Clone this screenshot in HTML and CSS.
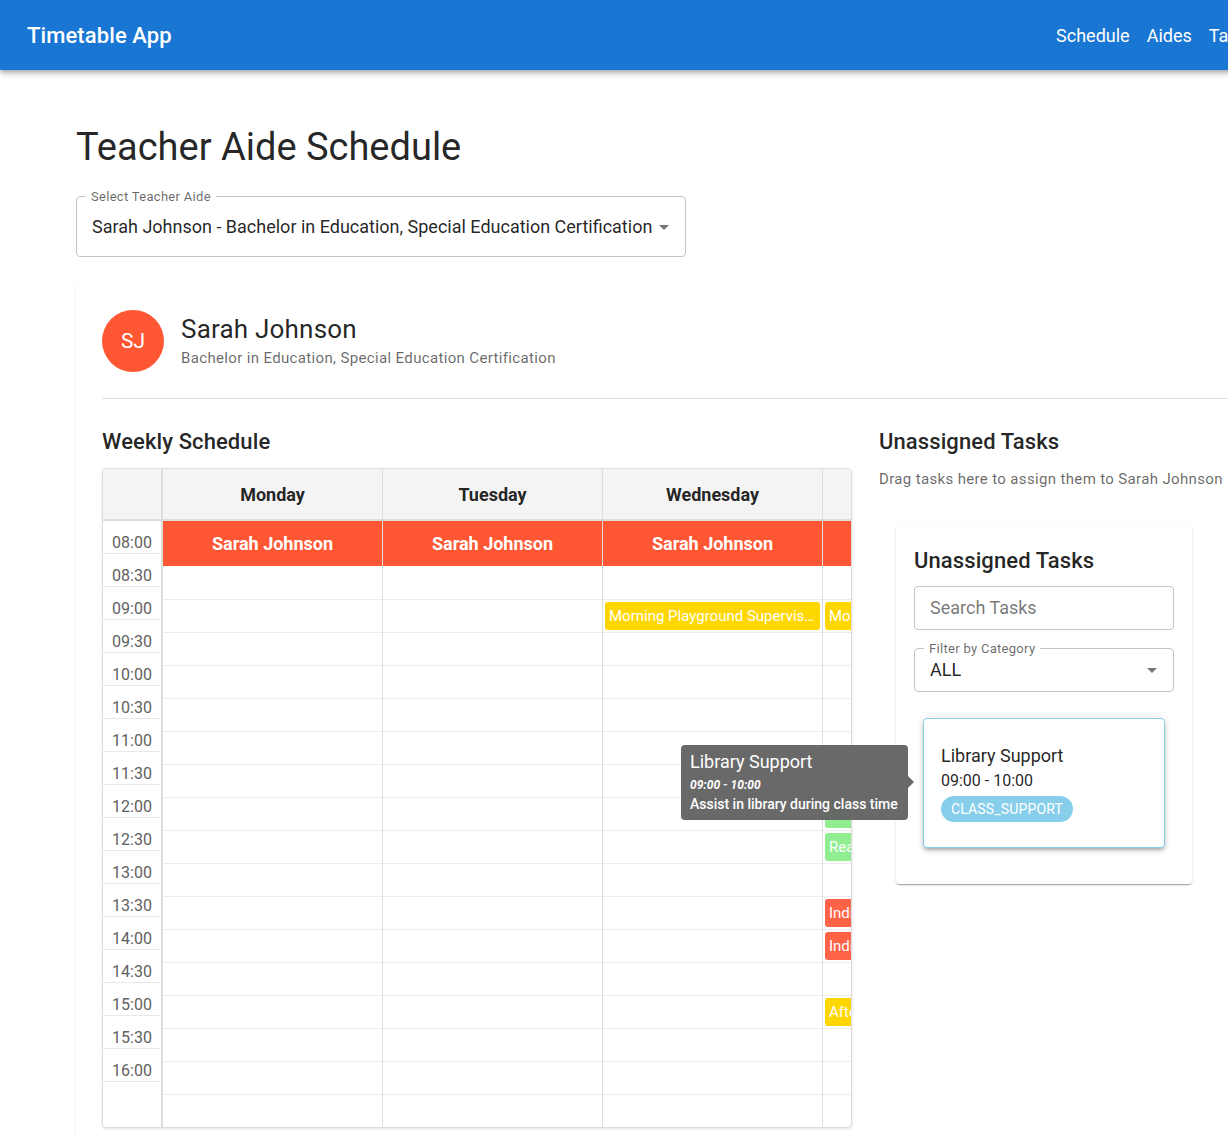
FILE: index.html
```html
<!DOCTYPE html>
<html lang="en">
<head>
<meta charset="utf-8">
<title>Timetable App</title>
<link rel="stylesheet" href="styles.css">
</head>
<body>
<header class="appbar">
  <div class="brand">Timetable App</div>
  <nav class="nav">
    <span>Schedule</span>
    <span>Aides</span>
    <span>Tasks</span>
  </nav>
</header>

<main class="main">
  <h1 class="page-title">Teacher Aide Schedule</h1>

  <div class="field select-aide">
    <span class="field-label">Select Teacher Aide</span>
    <span class="field-value">Sarah Johnson - Bachelor in Education, Special Education Certification</span>
    <svg class="caret" viewBox="0 0 24 24" width="24" height="24"><path d="M7 10l5 5 5-5z"/></svg>
  </div>

  <section class="card">
    <div class="profile">
      <div class="avatar">SJ</div>
      <div class="profile-text">
        <div class="profile-name">Sarah Johnson</div>
        <div class="profile-sub">Bachelor in Education, Special Education Certification</div>
      </div>
    </div>
    <hr class="divider">

    <div class="columns">
      <div class="left-col">
        <h2 class="section-title">Weekly Schedule</h2>
        <div class="calendar">
          <div class="cal-grid">
            <div class="time-col">
              <div class="cal-head"></div>
              <div class="time-cell">08:00</div>
              <div class="time-cell">08:30</div>
              <div class="time-cell">09:00</div>
              <div class="time-cell">09:30</div>
              <div class="time-cell">10:00</div>
              <div class="time-cell">10:30</div>
              <div class="time-cell">11:00</div>
              <div class="time-cell">11:30</div>
              <div class="time-cell">12:00</div>
              <div class="time-cell">12:30</div>
              <div class="time-cell">13:00</div>
              <div class="time-cell">13:30</div>
              <div class="time-cell">14:00</div>
              <div class="time-cell">14:30</div>
              <div class="time-cell">15:00</div>
              <div class="time-cell">15:30</div>
              <div class="time-cell">16:00</div>
            </div>

            <div class="day-col">
              <div class="cal-head">Monday</div>
              <div class="banner">Sarah Johnson</div>
              <div class="slot"></div><div class="slot"></div><div class="slot"></div><div class="slot"></div>
              <div class="slot"></div><div class="slot"></div><div class="slot"></div><div class="slot"></div>
              <div class="slot"></div><div class="slot"></div><div class="slot"></div><div class="slot"></div>
              <div class="slot"></div><div class="slot"></div><div class="slot"></div><div class="slot"></div>
              <div class="slot"></div>
            </div>

            <div class="day-col">
              <div class="cal-head">Tuesday</div>
              <div class="banner">Sarah Johnson</div>
              <div class="slot"></div><div class="slot"></div><div class="slot"></div><div class="slot"></div>
              <div class="slot"></div><div class="slot"></div><div class="slot"></div><div class="slot"></div>
              <div class="slot"></div><div class="slot"></div><div class="slot"></div><div class="slot"></div>
              <div class="slot"></div><div class="slot"></div><div class="slot"></div><div class="slot"></div>
              <div class="slot"></div>
            </div>

            <div class="day-col">
              <div class="cal-head">Wednesday</div>
              <div class="banner">Sarah Johnson</div>
              <div class="slot"></div>
              <div class="slot"><div class="event ev-yellow">Morning Playground Supervision</div></div>
              <div class="slot"></div><div class="slot"></div>
              <div class="slot"></div><div class="slot"></div><div class="slot"></div><div class="slot"></div>
              <div class="slot"></div><div class="slot"></div><div class="slot"></div><div class="slot"></div>
              <div class="slot"></div><div class="slot"></div><div class="slot"></div><div class="slot"></div>
              <div class="slot"></div>
            </div>

            <div class="day-col">
              <div class="cal-head">Thursday</div>
              <div class="banner">Sarah Johnson</div>
              <div class="slot"></div>
              <div class="slot"><div class="event ev-yellow">Morning Playground Supervision</div></div>
              <div class="slot"></div><div class="slot"></div><div class="slot"></div>
              <div class="slot"></div><div class="slot"></div>
              <div class="slot"><div class="event ev-green">Reading Assistance</div></div>
              <div class="slot"><div class="event ev-green">Reading Assistance</div></div>
              <div class="slot"></div>
              <div class="slot"><div class="event ev-red">Individual Student Support</div></div>
              <div class="slot"><div class="event ev-red">Individual Student Support</div></div>
              <div class="slot"></div>
              <div class="slot"><div class="event ev-yellow">Afternoon Pickup Duty</div></div>
              <div class="slot"></div><div class="slot"></div><div class="slot"></div>
            </div>

            <div class="day-col">
              <div class="cal-head">Friday</div>
              <div class="banner">Sarah Johnson</div>
              <div class="slot"></div><div class="slot"></div><div class="slot"></div><div class="slot"></div>
              <div class="slot"></div><div class="slot"></div><div class="slot"></div><div class="slot"></div>
              <div class="slot"></div><div class="slot"></div><div class="slot"></div><div class="slot"></div>
              <div class="slot"></div><div class="slot"></div><div class="slot"></div><div class="slot"></div>
              <div class="slot"></div>
            </div>
          </div>
        </div>
      </div>

      <div class="right-col">
        <h2 class="section-title">Unassigned Tasks</h2>
        <p class="section-sub">Drag tasks here to assign them to Sarah Johnson</p>

        <div class="panel">
          <h3 class="panel-title">Unassigned Tasks</h3>
          <div class="field search-field">
            <span class="placeholder">Search Tasks</span>
          </div>
          <div class="field filter-field">
            <span class="field-label">Filter by Category</span>
            <span class="field-value">ALL</span>
            <svg class="caret" viewBox="0 0 24 24" width="24" height="24"><path d="M7 10l5 5 5-5z"/></svg>
          </div>
          <div class="task-list">
            <div class="task-card">
              <div class="task-title">Library Support</div>
              <div class="task-time">09:00 - 10:00</div>
              <span class="chip">CLASS_SUPPORT</span>
            </div>
          </div>
        </div>
      </div>
    </div>
  </section>
</main>

<div class="tooltip">
  <div class="tt-title">Library Support</div>
  <div class="tt-time">09:00 - 10:00</div>
  <div class="tt-desc">Assist in library during class time</div>
</div>
</body>
</html>
```

FILE: styles.css
```css
html, body {
  overflow: hidden;
}

body {
  margin: 0;
  font-family: Roboto, "Noto Sans", "Liberation Sans", Arial, sans-serif;
  color: rgba(0, 0, 0, 0.87);
  background: #fff;
}

/* App bar */
.appbar {
  position: relative;
  z-index: 2;
  box-sizing: border-box;
  width: 1283px;
  height: 70px;
  padding: 0 27px;
  display: flex;
  align-items: center;
  background: #1976d2;
  color: #fff;
  box-shadow: 0 2px 4px -1px rgba(0,0,0,0.2), 0 4px 5px 0 rgba(0,0,0,0.14), 0 1px 10px 0 rgba(0,0,0,0.12);
}

.brand {
  font-size: 22px;
  font-weight: 500;
  letter-spacing: 0.1px;
}

.nav {
  margin-left: auto;
  display: flex;
  gap: 17px;
  font-size: 18px;
}

/* Main */
.main {
  width: 1217px;
  padding-left: 76px;
}

.page-title {
  margin: 55px 0 0;
  font-size: 38px;
  line-height: 45px;
  font-weight: 400;
}

.field {
  position: relative;
  box-sizing: border-box;
  display: flex;
  align-items: center;
  border: 1px solid #c4c4c4;
  border-radius: 4px;
  background: #fff;
}

.field-label {
  position: absolute;
  left: 9px;
  top: -8px;
  padding: 0 5px;
  background: #fff;
  font-size: 13px;
  line-height: 15px;
  letter-spacing: 0.3px;
  color: rgba(0, 0, 0, 0.6);
  white-space: nowrap;
}

.field-value {
  font-size: 18px;
  line-height: 22px;
  white-space: nowrap;
}

.caret {
  margin-left: auto;
  flex-shrink: 0;
  fill: rgba(0, 0, 0, 0.54);
}

.select-aide {
  margin-top: 26px;
  width: 610px;
  height: 61px;
  padding: 0 9px 0 15px;
}

.select-aide .field-value {
  margin-top: 1px;
}

/* Card */
.card {
  box-sizing: border-box;
  width: 1217px;
  margin-top: 27px;
  padding: 26px;
  border-radius: 4px;
  background: #fff;
  box-shadow: 0 1px 3px rgba(0,0,0,0.08), 0 0 1px rgba(0,0,0,0.06);
}

.profile {
  display: flex;
  align-items: center;
  gap: 17px;
}

.avatar {
  width: 62px;
  height: 62px;
  border-radius: 50%;
  background: #ff5733;
  color: #fff;
  display: flex;
  align-items: center;
  justify-content: center;
  font-size: 21px;
}

.profile-name {
  font-size: 26px;
  line-height: 30px;
  letter-spacing: 0.2px;
}

.profile-sub {
  margin-top: 3px;
  font-size: 15px;
  line-height: 22px;
  letter-spacing: 0.35px;
  color: rgba(0, 0, 0, 0.6);
}

.divider {
  margin: 26px 0 0;
  border: 0;
  border-top: 1px solid #e0e0e0;
  height: 0;
}

.columns {
  display: flex;
  gap: 27px;
}

.left-col {
  width: 750px;
  flex-shrink: 0;
}

.right-col {
  width: 388px;
  flex-shrink: 0;
}

.section-title {
  margin: 29px 0 0;
  font-size: 22px;
  line-height: 28px;
  font-weight: 500;
  letter-spacing: 0.1px;
}

.section-sub {
  margin: 12px 0 0;
  font-size: 15px;
  line-height: 22px;
  letter-spacing: 0.35px;
  color: rgba(0, 0, 0, 0.6);
  white-space: nowrap;
}

/* Calendar */
.calendar {
  margin-top: 12px;
  box-sizing: border-box;
  width: 750px;
  border: 1px solid #dddddd;
  border-radius: 4px;
  overflow: hidden;
  box-shadow: 0 1px 3px rgba(0,0,0,0.12);
}

.cal-grid {
  display: flex;
  width: 1160px;
}

.time-col {
  box-sizing: border-box;
  width: 60px;
  flex-shrink: 0;
  border-right: 2px solid #dddddd;
}

.day-col {
  box-sizing: border-box;
  width: 220px;
  flex-shrink: 0;
  border-right: 1px solid #dddddd;
}

.cal-head {
  box-sizing: border-box;
  height: 52px;
  border-bottom: 2px solid #dddddd;
  background: #f4f4f4;
  display: flex;
  align-items: center;
  justify-content: center;
  font-size: 18px;
  font-weight: 700;
}

.time-cell {
  box-sizing: border-box;
  height: 33px;
  padding-top: 12px;
  border-bottom: 1px solid #e8e8e8;
  text-align: center;
  font-size: 16px;
  line-height: 19px;
  color: #616161;
}

.banner {
  height: 45px;
  background: #ff5733;
  color: #fff;
  display: flex;
  align-items: center;
  justify-content: center;
  font-size: 18px;
  font-weight: 700;
}

.slot {
  box-sizing: border-box;
  height: 33px;
  border-top: 1px solid #ececec;
}

.banner + .slot {
  border-top: 0;
}

.event {
  margin: 2px 2px 0;
  height: 28px;
  padding: 0 4px;
  border-radius: 3px;
  color: #fff;
  font-size: 15px;
  line-height: 28px;
  white-space: nowrap;
  overflow: hidden;
  text-overflow: ellipsis;
}

.ev-yellow { background: #ffd700; }
.ev-green { background: #90ee90; }
.ev-red { background: #ff6347; }

/* Panel */
.panel {
  box-sizing: border-box;
  width: 296px;
  margin: 36px 0 0 17px;
  padding: 21px 18px 27px;
  border-radius: 4px;
  background: #fff;
  box-shadow: 0 2px 1px -1px rgba(0,0,0,0.2), 0 1px 1px 0 rgba(0,0,0,0.14), 0 1px 3px 0 rgba(0,0,0,0.12);
}

.panel-title {
  margin: 0;
  font-size: 22px;
  line-height: 28px;
  font-weight: 500;
  letter-spacing: 0.1px;
}

.search-field {
  margin-top: 11px;
  height: 44px;
  padding: 0 15px;
}

.placeholder {
  font-size: 18px;
  line-height: 22px;
  color: rgba(0, 0, 0, 0.55);
}

.filter-field {
  margin-top: 18px;
  height: 44px;
  padding: 0 9px 0 15px;
}

.task-list {
  margin-top: 17px;
  padding: 9px;
}

.task-card {
  padding: 25px 17px;
  border: 1px solid #87ceeb;
  border-radius: 4px;
  background: #fff;
  box-shadow: 0 3px 3px -2px rgba(0,0,0,0.2), 0 3px 4px 0 rgba(0,0,0,0.14), 0 1px 8px 0 rgba(0,0,0,0.12);
}

.task-title {
  font-size: 18px;
  line-height: 24px;
}

.task-time {
  margin-top: 2px;
  font-size: 16px;
  line-height: 22px;
}

.chip {
  display: inline-block;
  margin-top: 4px;
  height: 26px;
  padding: 0 10px;
  border-radius: 13px;
  background: #87ceeb;
  color: #fff;
  font-size: 14px;
  line-height: 26px;
  letter-spacing: 0.15px;
}

/* Tooltip overlay */
.tooltip {
  position: absolute;
  left: 681px;
  top: 745px;
  z-index: 5;
  box-sizing: border-box;
  width: 227px;
  padding: 6px 9px 7px;
  border-radius: 4px;
  background: rgba(97, 97, 97, 0.95);
  color: #fff;
}

.tooltip::after {
  content: "";
  position: absolute;
  right: -6px;
  top: 31px;
  border-style: solid;
  border-width: 6px 0 6px 6px;
  border-color: transparent transparent transparent rgba(97, 97, 97, 0.95);
}

.tt-title {
  font-size: 18px;
  line-height: 22px;
}

.tt-time {
  margin-top: 3px;
  font-size: 12px;
  line-height: 18px;
  font-weight: 700;
  font-style: italic;
}

.tt-desc {
  margin-top: 1px;
  font-size: 14px;
  line-height: 18px;
  font-weight: 500;
  white-space: nowrap;
}
```
